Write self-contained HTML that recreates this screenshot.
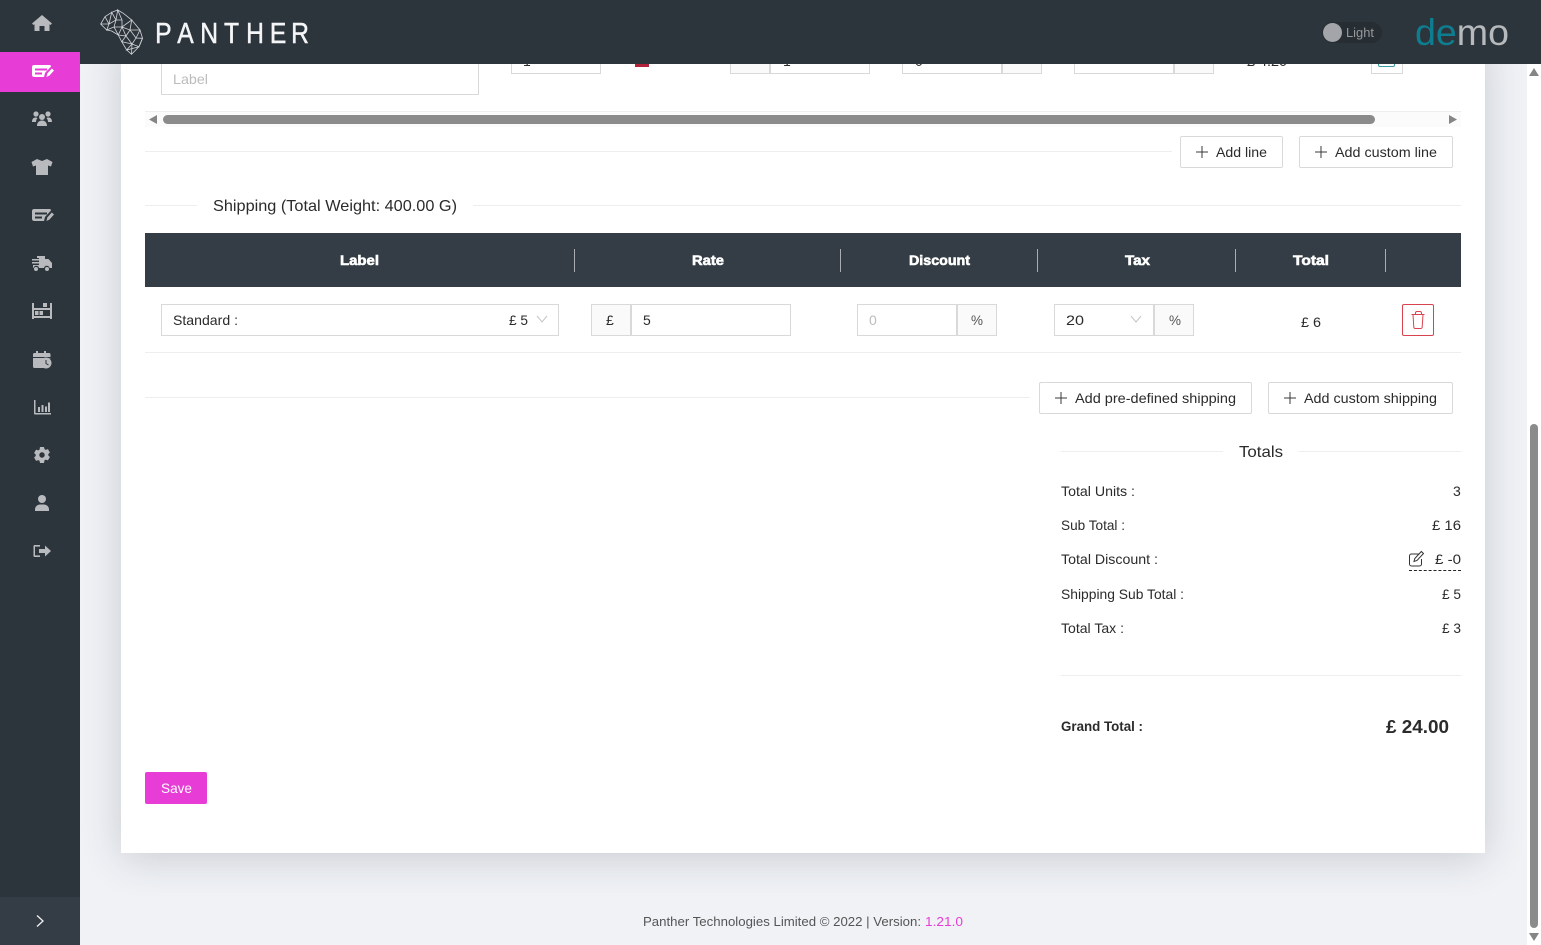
<!DOCTYPE html>
<html lang="en"><head><meta charset="utf-8"><title>Panther</title>
<style>
html,body{margin:0;padding:0;width:1541px;height:945px;overflow:hidden;background:#f0f2f6;font-family:"Liberation Sans",sans-serif}
div{position:absolute;box-sizing:border-box}
.b{border:1px solid #d9d9d9;background:#fff}
.g{border:1px solid #d9d9d9;background:#fafafa}
.btn{border:1px solid #d9d9d9;background:#fff;border-radius:2px;top:136px;height:32px}
.l{background:#eeeeee;height:1px}
.s{background:#a9adb1;width:1px;top:249px;height:23px}
svg.o{position:absolute;left:0;top:0}
text{font-family:"Liberation Sans",sans-serif;font-size:14px;fill:#2b2b2b}
</style></head><body>
<div style="left:121px;top:40px;width:1364px;height:813px;background:#fff;box-shadow:0 5px 38px rgba(40,50,60,.2)"></div>
<div style="left:1527px;top:64px;width:14px;height:881px;background:#fff"></div>
<div style="left:1530px;top:424px;width:8px;height:504px;background:#8b8b8b;border-radius:4px"></div>

<div class="b" style="left:161px;top:40px;width:318px;height:55px"></div>
<div class="b" style="left:511px;top:40px;width:90px;height:34px"></div>
<div class="g" style="left:730px;top:40px;width:40px;height:34px"></div>
<div class="b" style="left:770px;top:40px;width:100px;height:34px"></div>
<div class="b" style="left:902px;top:40px;width:100px;height:34px"></div>
<div class="g" style="left:1002px;top:40px;width:40px;height:34px"></div>
<div class="b" style="left:1074px;top:40px;width:100px;height:34px"></div>
<div class="g" style="left:1174px;top:40px;width:40px;height:34px"></div>
<div class="b" style="left:1371px;top:40px;width:32px;height:34px"></div>
<div style="left:1378px;top:60px;width:17px;height:7px;border:1px solid #3a9aa8;border-radius:2px"></div>
<div style="left:635px;top:62px;width:14px;height:5px;background:#b3203a"></div>
<svg class="o" width="1541" height="80" viewBox="0 0 1541 80">
<text x="523" y="66">1</text>
<text x="783" y="66">1</text>
<text x="915" y="66">0</text>
<text x="1247" y="66" textLength="40" lengthAdjust="spacingAndGlyphs">£ 4.20</text>
</svg>

<div style="left:145px;top:111px;width:1316px;height:16px;background:#fbfbfb;border-top:1px solid #eee"></div>
<div style="left:163px;top:115px;width:1212px;height:9px;background:#8b8b8b;border-radius:5px"></div>
<div class="l" style="left:145px;top:151px;width:1027px"></div>
<div class="btn" style="left:1180px;width:103px"></div>
<div class="btn" style="left:1299px;width:154px"></div>
<div class="l" style="left:145px;top:205px;width:52px"></div>
<div class="l" style="left:473px;top:205px;width:988px"></div>

<div style="left:145px;top:233px;width:1316px;height:54px;background:#343d45"></div>
<div class="s" style="left:574px"></div><div class="s" style="left:840px"></div><div class="s" style="left:1037px"></div><div class="s" style="left:1235px"></div><div class="s" style="left:1385px"></div>

<div class="b" style="left:161px;top:304px;width:398px;height:32px"></div>
<div class="g" style="left:591px;top:304px;width:40px;height:32px"></div>
<div class="b" style="left:631px;top:304px;width:160px;height:32px"></div>
<div class="b" style="left:857px;top:304px;width:100px;height:32px"></div>
<div class="g" style="left:957px;top:304px;width:40px;height:32px"></div>
<div class="b" style="left:1054px;top:304px;width:100px;height:32px"></div>
<div class="g" style="left:1154px;top:304px;width:40px;height:32px"></div>
<div style="left:1402px;top:304px;width:32px;height:32px;border:1px solid #d9434e;border-radius:2px;background:#fff"></div>
<div class="l" style="left:145px;top:352px;width:1316px"></div>
<div class="l" style="left:145px;top:397px;width:885px"></div>
<div class="btn" style="left:1039px;top:382px;width:213px"></div>
<div class="btn" style="left:1268px;top:382px;width:185px"></div>
<div class="l" style="left:1061px;top:451px;width:162px"></div>
<div class="l" style="left:1299px;top:451px;width:162px"></div>
<div class="l" style="left:1061px;top:675px;width:400px"></div>
<div style="left:1409px;top:570px;width:52px;border-top:1px dashed #222"></div>
<div style="left:145px;top:772px;width:62px;height:32px;background:#e83cd6;border-radius:2px"></div>

<div style="left:0;top:0;width:1541px;height:64px;background:#2d353c"></div>
<div style="left:0;top:0;width:80px;height:945px;background:#2d353c"></div>
<div style="left:0;top:52px;width:80px;height:40px;background:#e83cd6"></div>
<div style="left:0;top:897px;width:80px;height:48px;background:#343d45"></div>
<div style="left:1322px;top:22px;width:60px;height:21px;background:#262d33;border-radius:11px"></div>
<div style="left:1323px;top:23px;width:19px;height:19px;background:#a3a5a8;border-radius:50%"></div>

<svg class="o" width="1541" height="945" viewBox="0 0 1541 945">
<!-- scrollbar arrows -->
<g fill="#858585"><path d="M157 115v9l-8-4.500z"/><path d="M1449 115v9l8-4.500z"/><path d="M1529 76l5-8 5 8z"/><path d="M1529 933l5 8 5-8z"/></g>

<!-- logo -->
<g fill="none" stroke="#d3d5d8" stroke-width=".8">
<path d="M100.700 24L105 16.700 111.700 12.300 117.700 10 123.300 13.300 131.700 20 140 30 142.500 38.300 139 46.700 131.500 54.300 126.700 50 121.700 41.700 118.300 35 111.700 31 106.700 30z"/>
<path d="M105 16.700L109 24 100.700 24M109 24L111.700 12.300 116 20 109 24 106.700 30 114 27 116 20 117.700 10 122 20 116 20M114 27L118.300 35 122 27 114 27M122 20L122 27 131.700 20 130 30 122 27 126 36 118.300 35M130 30L140 30 136 38 130 30 126 36 132 44 136 38 142.500 38.300 139 46.700 132 44 121.700 41.700 126 36M132 44L126.700 50 139 46.700M132 44L131.500 54.300"/>
</g>
<g transform="translate(156 43) scale(.85 1)"><text x="-1 25 52 80 106 134 159" y="0" style="font-size:29px;fill:#f4f5f6;stroke:#f4f5f6;stroke-width:.5">PANTHER</text></g>
<text x="1346" y="37" textLength="28" lengthAdjust="spacingAndGlyphs" style="font-size:12.500px;fill:#96999c">Light</text>
<text x="1415" y="45" textLength="94" lengthAdjust="spacingAndGlyphs" style="font-size:37px;fill:#b7babd"><tspan style="fill:#0f7d90">de</tspan>mo</text>

<!-- sidebar icons -->
<g fill="#b8babd">
<path d="M42 15l10 8.500-1.500 1.500-1-.8V31h-5v-5h-5v5h-5v-6.800l-1 .8-1.500-1.500z"/>
<g fill="#fff"><path fill-rule="evenodd" d="M34 65h15.500c1.200 0 1.500.6 1.500 1.500l-6 6.500-1 4H34.500c-1.500 0-2.500-.8-2.500-2v-8c0-1.200 1-2 2-2zm1 3.500v2h12v-2zm0 4v2h7v-2z"/><path d="M46.500 77l.8-3.500 4.500-5 2.200 2-4.500 5z"/></g>
<path fill-rule="evenodd" d="M34 209h15.500c1.200 0 1.500.6 1.500 1.500l-6 6.500-1 4H34.500c-1.500 0-2.500-.8-2.500-2v-8c0-1.200 1-2 2-2zm1 3.500v2h12v-2zm0 4v2h7v-2z"/><path d="M46.500 221l.8-3.500 4.500-5 2.200 2-4.500 5z"/>
<!-- users -->
<circle cx="36" cy="114" r="2.600"/><circle cx="48" cy="114" r="2.600"/><circle cx="42" cy="117" r="3"/>
<path d="M32 122c0-3 1.500-4.500 3.500-4.500 1 0 1.500.2 2 .6-1 1-1.500 2.200-1.500 3.900zM52 122c0-3-1.500-4.500-3.500-4.500-1 0-1.500.2-2 .6 1 1 1.500 2.200 1.500 3.900zM37 126c0-3.500 2-5.500 5-5.500s5 2 5 5.500z"/>
<!-- shirt -->
<path d="M37 159l5 2 5-2 5.500 3-1.500 4.500-3-1V175H36v-9.500l-3 1-1.500-4.500z"/>
<!-- truck -->
<path d="M37 256h8v3h3.500l3.500 4v5h-2.500a2.800 2.800 0 0 0-5.500 0h-5a2.800 2.800 0 0 0-5.500 0H33v-3h6v-1.500h-7V262h7v-1.500h-7V259h7v-1h-2z"/><circle cx="36" cy="269" r="2"/><circle cx="47" cy="269" r="2"/>
<!-- shelves -->
<path fill-rule="evenodd" d="M32 303h2v5h16v-5h2v16h-2v-1H34v1h-2zm2 7v6h16v-6z"/><path d="M43 303h4v4h-4zM35 311h3.500v4H35zM39.500 311H43v4h-3.500z"/>
<!-- calendar -->
<path d="M36 351h2v2h6v-2h2v2h3c1 0 1.500.5 1.500 1.500V357H33v-2.500c0-1 .5-1.500 1.500-1.500H36zM33 358h17.500v.5a6.500 6.500 0 0 0-7 9.500H34.500c-1 0-1.500-.5-1.500-1.500z"/>
<circle cx="46" cy="363" r="5.500"/><path d="M46 360v3.500l2.500 1.500" fill="none" stroke="#2d353c" stroke-width="1"/>
<!-- chart -->
<path d="M34 400h1.500v13H51v1.500H35c-.6 0-1-.4-1-1zM38 407h2v5h-2zM41.500 405h2v7h-2zM45 406.500h2v5.500h-2zM48 402.500h2v9.500h-2z"/>
<!-- cog -->
<path fill-rule="evenodd" d="M40 447h4l.5 2.200 1.300.7 2.100-.8 2 3.400-1.600 1.500v1.500l1.600 1.500-2 3.400-2.100-.8-1.300.7L44 463h-4l-.5-2.200-1.300-.7-2.100.8-2-3.400 1.600-1.500v-1.500l-1.600-1.500 2-3.400 2.100.8 1.300-.7zm2 5.300a2.700 2.700 0 1 0 .01 0z"/>
<!-- user -->
<circle cx="42" cy="499" r="4"/><path d="M35 511v-1.500c0-3 2.500-5 5-5h4c2.500 0 5 2 5 5v1.500z"/>
<!-- logout -->
<path d="M40 545h-5c-1.500 0-1.500 1-1.500 1.500v9c0 .5 0 1.500 1.500 1.500h5v-1.600h-5v-8.800h5zM45 545.500l6 5.500-6 5.500V553h-6v-4h6z"/>
</g>
<path d="M37 915.500l6 5.500-6 5.500" fill="none" stroke="#f0f1f2" stroke-width="1.300"/>

<!-- body text -->
<text x="173" y="84" textLength="35" lengthAdjust="spacingAndGlyphs" style="fill:#bcbcbc">Label</text>
<g fill="none" stroke="#3a3a3a" stroke-width="1"><path d="M1196 152h12M1202 146v12M1315 152h12M1321 146v12M1055 398h12M1061 392v12M1284 398h12M1290 392v12"/></g>
<text x="1216" y="157" textLength="51" lengthAdjust="spacingAndGlyphs">Add line</text>
<text x="1335" y="157" textLength="102" lengthAdjust="spacingAndGlyphs">Add custom line</text>
<text x="213" y="211" textLength="244" lengthAdjust="spacingAndGlyphs" style="font-size:16px">Shipping (Total Weight: 400.00 G)</text>
<text x="340" y="265" textLength="39" lengthAdjust="spacingAndGlyphs" style="fill:#fff;font-weight:bold;stroke:#fff;stroke-width:.6">Label</text>
<text x="692" y="265" textLength="32" lengthAdjust="spacingAndGlyphs" style="fill:#fff;font-weight:bold;stroke:#fff;stroke-width:.6">Rate</text>
<text x="909" y="265" textLength="61" lengthAdjust="spacingAndGlyphs" style="fill:#fff;font-weight:bold;stroke:#fff;stroke-width:.6">Discount</text>
<text x="1125" y="265" textLength="25" lengthAdjust="spacingAndGlyphs" style="fill:#fff;font-weight:bold;stroke:#fff;stroke-width:.6">Tax</text>
<text x="1293" y="265" textLength="36" lengthAdjust="spacingAndGlyphs" style="fill:#fff;font-weight:bold;stroke:#fff;stroke-width:.6">Total</text>
<text x="173" y="325" textLength="65" lengthAdjust="spacingAndGlyphs">Standard :</text>
<text x="509" y="325" textLength="19" lengthAdjust="spacingAndGlyphs">£ 5</text>
<path d="M537 316l5 6 5-6M1131 316l5 6 5-6" fill="none" stroke="#c4c4c4"/>
<text x="606" y="325">£</text>
<text x="643" y="325">5</text>
<text x="869" y="325" style="fill:#bcbcbc">0</text>
<text x="971" y="325" textLength="12" lengthAdjust="spacingAndGlyphs" style="fill:#555">%</text>
<text x="1066" y="325" textLength="18" lengthAdjust="spacingAndGlyphs">20</text>
<text x="1169" y="325" textLength="12" lengthAdjust="spacingAndGlyphs" style="fill:#555">%</text>
<text x="1301" y="327" textLength="20" lengthAdjust="spacingAndGlyphs">£ 6</text>
<g fill="none" stroke="#d9434e" stroke-width="1"><path d="M1411.500 314.500h13M1415.500 314.500v-1.500a1.500 1.500 0 0 1 1.500-1.500h3a1.500 1.500 0 0 1 1.500 1.500v1.500"/><path d="M1413 314.500l.8 12.500a1.500 1.500 0 0 0 1.500 1.500h5.400a1.500 1.500 0 0 0 1.500-1.500l.8-12.500"/></g>
<text x="1075" y="403" textLength="161" lengthAdjust="spacingAndGlyphs">Add pre-defined shipping</text>
<text x="1304" y="403" textLength="133" lengthAdjust="spacingAndGlyphs">Add custom shipping</text>
<text x="1239" y="457" textLength="44" lengthAdjust="spacingAndGlyphs" style="font-size:16px">Totals</text>
<text x="1061" y="496" textLength="74" lengthAdjust="spacingAndGlyphs">Total Units :</text>
<text x="1453" y="496">3</text>
<text x="1061" y="530" textLength="64" lengthAdjust="spacingAndGlyphs">Sub Total :</text>
<text x="1432" y="530" textLength="29" lengthAdjust="spacingAndGlyphs">£ 16</text>
<text x="1061" y="564" textLength="97" lengthAdjust="spacingAndGlyphs">Total Discount :</text>
<text x="1435" y="564" textLength="26" lengthAdjust="spacingAndGlyphs">£ -0</text>
<text x="1061" y="599" textLength="123" lengthAdjust="spacingAndGlyphs">Shipping Sub Total :</text>
<text x="1442" y="599" textLength="19" lengthAdjust="spacingAndGlyphs">£ 5</text>
<text x="1061" y="633" textLength="63" lengthAdjust="spacingAndGlyphs">Total Tax :</text>
<text x="1442" y="633" textLength="19" lengthAdjust="spacingAndGlyphs">£ 3</text>
<g fill="none" stroke="#333" stroke-width="1"><path d="M1419.500 554h-8a2 2 0 0 0-2 2v8a2 2 0 0 0 2 2h8a2 2 0 0 0 2-2v-5"/><path d="M1414 561.500l.8-3 6.500-7 2.200 2-6.500 7z"/></g>
<text x="1061" y="731" textLength="82" lengthAdjust="spacingAndGlyphs" style="font-weight:bold">Grand Total :</text>
<text x="1386" y="733" textLength="63" lengthAdjust="spacingAndGlyphs" style="font-weight:bold;font-size:18px">£ 24.00</text>
<text x="161" y="793" textLength="31" lengthAdjust="spacingAndGlyphs" style="fill:#fff">Save</text>
<text x="643" y="926" textLength="278" lengthAdjust="spacingAndGlyphs" style="font-size:13px;fill:#555">Panther Technologies Limited © 2022 | Version:</text>
<text x="925" y="926" textLength="38" lengthAdjust="spacingAndGlyphs" style="font-size:13px;fill:#e83cd6">1.21.0</text>
</svg>
</body></html>
